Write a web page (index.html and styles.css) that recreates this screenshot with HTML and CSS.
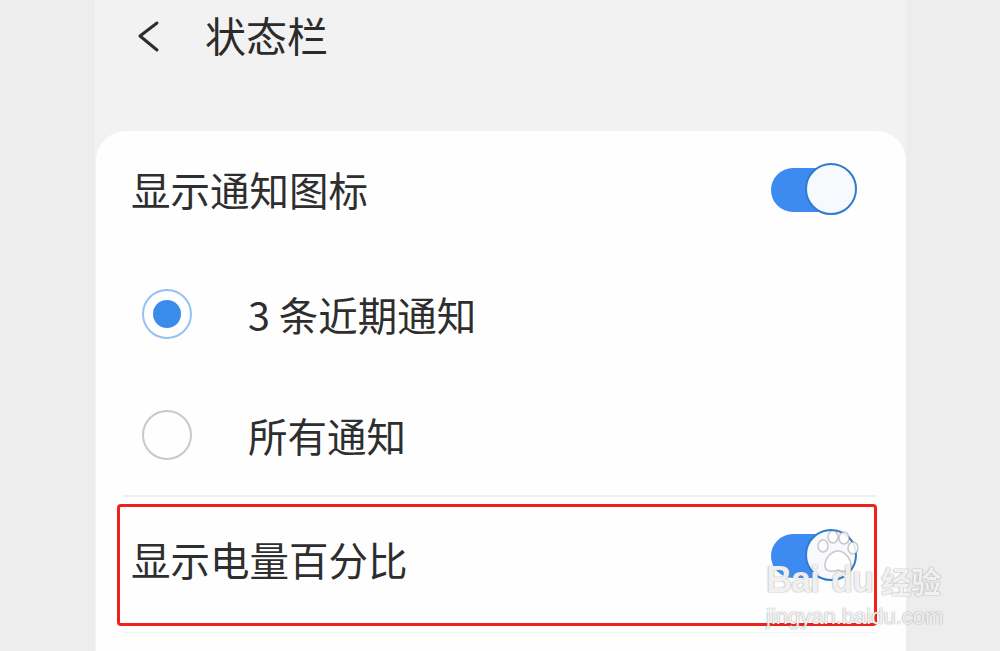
FILE: index.html
```html
<!DOCTYPE html>
<html lang="zh-CN">
<head>
<meta charset="utf-8">
<title>状态栏</title>
<link rel="stylesheet" href="styles.css">
</head>
<body>
<div class="screen">
  <header class="topbar">
    <svg class="back" width="26" height="36" viewBox="0 0 26 36"><path d="M22 4 L5 17 L22 31" fill="none" stroke="#2d2d2d" stroke-width="3" stroke-linecap="round" stroke-linejoin="round"/></svg>
    <h1 class="title">状态栏</h1>
  </header>
  <section class="card">
    <div class="row first">
      <span class="label">显示通知图标</span>
      <span class="switch"><span class="knob"></span></span>
    </div>
    <div class="row radio-row">
      <span class="radio checked"><span class="dot"></span></span>
      <span class="label">3 条近期通知</span>
    </div>
    <div class="row radio-row">
      <span class="radio"></span>
      <span class="label">所有通知</span>
    </div>
    <div class="divider"></div>
    <div class="row highlight">
      <span class="label">显示电量百分比</span>
      <span class="switch"><span class="knob"></span></span>
    </div>
    <div class="divider bottom"></div>
  </section>
</div>
<div class="watermark">
  <div class="wm-top">
    <span class="wm-bai">Bai</span>
    <svg class="paw" width="50" height="44" viewBox="0 0 50 44">
      <g fill="rgba(255,255,255,0.85)" stroke="rgba(150,150,150,0.5)" stroke-width="1.5">
        <ellipse cx="12" cy="16" rx="5" ry="6"/>
        <ellipse cx="22" cy="7" rx="5" ry="6"/>
        <ellipse cx="33" cy="8" rx="5" ry="6"/>
        <ellipse cx="42" cy="18" rx="5" ry="6"/>
        <path d="M14 36 C14 26 22 21 27 21 C33 21 40 28 40 36 C40 42 32 42 27 40 C22 42 14 42 14 36 Z"/>
      </g>
    </svg>
    <span class="wm-du">du</span>
    <span class="wm-jy">经验</span>
  </div>
  <div class="wm-url">jingyan.baidu.com</div>
</div>
</body>
</html>
```

FILE: styles.css
```css
* { box-sizing: border-box; }
html, body { margin: 0; padding: 0; }
body {
  width: 1000px;
  height: 651px;
  background: #ededed;
  overflow: hidden;
  font-family: "Noto Sans CJK SC", "Noto Sans", sans-serif;
  color: #2e2e2e;
  position: relative;
}
.screen {
  margin-left: 95px;
  width: 811px;
  height: 651px;
  background: #f2f2f2;
  display: flex;
  flex-direction: column;
}
.topbar {
  height: 131px;
  display: flex;
  align-items: flex-start;
  padding-top: 19px;
  padding-left: 40px;
}
.title {
  margin: -13px 0 0 44px;
  font-size: 41px;
  font-weight: 400;
  line-height: 56px;
  color: #2b2b2b;
}
.card {
  flex: 1;
  background: #fefefe;
  border-radius: 30px 30px 0 0;
  margin-left: 1px;
  display: flex;
  flex-direction: column;
}
.row {
  display: flex;
  align-items: center;
  padding: 0 49px 0 35px;
  height: 122px;
}
.row.first { padding-bottom: 6px; }
.label {
  font-size: 39.5px;
  line-height: 50px;
  flex: 1;
}
.radio-row { padding-left: 46px; height: 121px; }
.radio-row .label { margin-left: 56px; }
.radio {
  width: 50px;
  height: 50px;
  border-radius: 50%;
  border: 2px solid #c9c9c9;
  display: flex;
  align-items: center;
  justify-content: center;
  flex: none;
}
.radio.checked { border-color: #95c2f2; }
.dot {
  width: 28px;
  height: 28px;
  border-radius: 50%;
  background: #3b8beb;
}
.switch {
  position: relative;
  width: 86px;
  height: 51px;
  flex: none;
  display: flex;
  align-items: center;
  justify-content: flex-end;
}
.switch::before {
  content: "";
  position: absolute;
  left: 0;
  top: 4px;
  width: 70px;
  height: 44px;
  border-radius: 22px;
  background: #3d8bf1;
}
.knob {
  position: relative;
  width: 52px;
  height: 52px;
  border-radius: 50%;
  background: #f7f9fc;
  border: 2.5px solid #2f7ccd;
}
.divider {
  height: 2px;
  background: #eeeeee;
  margin: 0 30px 0 27px;
}
.highlight {
  margin: 7px 29px 0 21px;
  height: 122px;
  border: 3px solid #f0201a;
  border-radius: 4px;
  padding: 0 17px 0 11px;
}
.highlight .label { margin-bottom: 12px; }
.highlight .switch { margin-bottom: 20px; }
.divider.bottom {
  margin-top: 6px;
  height: 1px;
  background: #f3f3f3;
}
.watermark {
  position: absolute;
  left: 766px;
  top: 536px;
  color: rgba(255,255,255,0.9);
  text-shadow: 0 0 1px rgba(110,110,110,0.7), 0 0 2px rgba(140,140,140,0.4);
  font-family: "Liberation Sans", "Noto Sans CJK SC", sans-serif;
}
.wm-top {
  display: flex;
  align-items: flex-end;
  height: 62px;
}
.wm-bai, .wm-du {
  font-size: 36px;
  font-weight: 700;
  line-height: 36px;
  letter-spacing: -1px;
}
.paw { margin: 0 -30px 24px -8px; }
.wm-du { margin-right: 8px; }
.wm-jy {
  font-family: "Noto Sans CJK SC", sans-serif;
  font-size: 30px;
  line-height: 36px;
  font-weight: 700;
}
.wm-url {
  font-size: 22px;
  line-height: 26px;
  margin-top: 6px;
}
```
